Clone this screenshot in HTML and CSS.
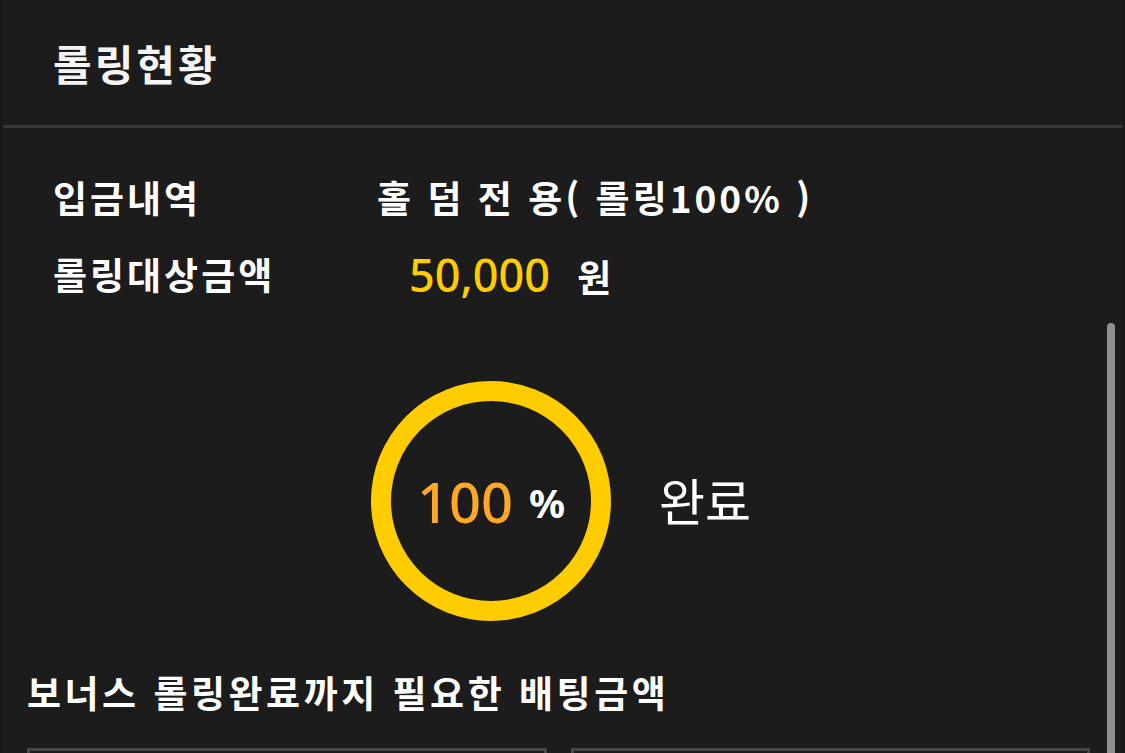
FILE: index.html
```html
<!DOCTYPE html>
<html lang="ko">
<head>
    <meta charset="utf-8">
    <title>롤링현황</title>
    <link rel="stylesheet" href="styles.css">
</head>
<body>
    <div class="panel">
        <div class="panel-head">
            <h1 class="panel-title">롤링현황</h1>
        </div>

        <div class="panel-body">
            <div class="info-grid">
                <div class="info-label">입금내역</div>
                <div class="info-value">홀 덤 전 용( 롤링100% )</div>
                <div class="info-label">롤링대상금액</div>
                <div class="info-value info-amount"><span class="amount">50,000</span> 원</div>
            </div>

            <div class="progress-row">
                <div class="ring">
                    <span class="ring-num">100</span>
                    <span class="ring-pct">%</span>
                </div>
                <div class="progress-state">완료</div>
            </div>

            <h2 class="bonus-title">보너스 롤링완료까지 필요한 배팅금액</h2>
            <div class="bonus-boxes">
                <div class="bonus-box"></div>
                <div class="bonus-box"></div>
            </div>
        </div>

        <div class="scroll-thumb"></div>
    </div>
</body>
</html>
```

FILE: styles.css
```css
body {
    margin: 0px;
    background-color: #1a1a1a;
    overflow: hidden;
    font-family: "Noto Sans CJK KR", "Noto Sans", sans-serif;
    color: #ffffff;
}

.panel {
    position: relative;
    height: 753px;
    overflow: hidden;
    margin-left: 3px;
    margin-right: 3px;
    background-color: #1c1c1c;
}

.panel-head {
    height: 125px;
    display: flex;
    align-items: center;
    padding-left: 50px;
    border-bottom: 3px solid #383838;
}

.panel-title {
    margin: 0;
    font-size: 42px;
    font-weight: 700;
    color: #f4f4f4;
    letter-spacing: 3px;
}

.panel-body {
    padding: 44px 0 0 24px;
}

.info-grid {
    display: grid;
    grid-template-columns: 324px auto;
    row-gap: 26px;
    padding-left: 26px;
    font-size: 37px;
    font-weight: 700;
    line-height: 51px;
    letter-spacing: 3px;
}

.info-amount {
    padding-left: 32px;
    letter-spacing: 0;
}

.amount {
    color: #ffcc00;
    font-family: "Noto Sans", sans-serif;
    font-weight: 500;
    font-size: 45px;
    margin-right: 17px;
}

.progress-row {
    display: flex;
    align-items: center;
    gap: 48px;
    margin-top: 79px;
    padding-left: 344px;
}

.ring {
    width: 200px;
    height: 200px;
    border: 20px solid #ffcc00;
    border-radius: 50%;
    display: flex;
    align-items: center;
    justify-content: center;
    gap: 16px;
    font-family: "Noto Sans", sans-serif;
}

.ring-num {
    color: #ffa726;
    font-size: 56px;
    font-weight: 500;
}

.ring-pct {
    font-size: 40px;
    font-weight: 700;
    margin-top: 2px;
}

.progress-state {
    font-size: 50px;
    font-weight: 400;
    margin-top: -4px;
}

.bonus-title {
    margin: 47px 0 0 0;
    font-size: 37px;
    font-weight: 700;
    line-height: 48px;
    letter-spacing: 3.5px;
}

.bonus-boxes {
    display: flex;
    gap: 24px;
    margin-top: 32px;
    width: 1063px;
}

.bonus-box {
    flex: 1;
    height: 4px;
    border: 3px solid #474747;
    border-bottom: none;
}

.scroll-thumb {
    position: absolute;
    top: 323px;
    right: 7px;
    width: 8px;
    height: 430px;
    background-color: #8f8f8f;
    border-radius: 4px 4px 0 0;
}
```
